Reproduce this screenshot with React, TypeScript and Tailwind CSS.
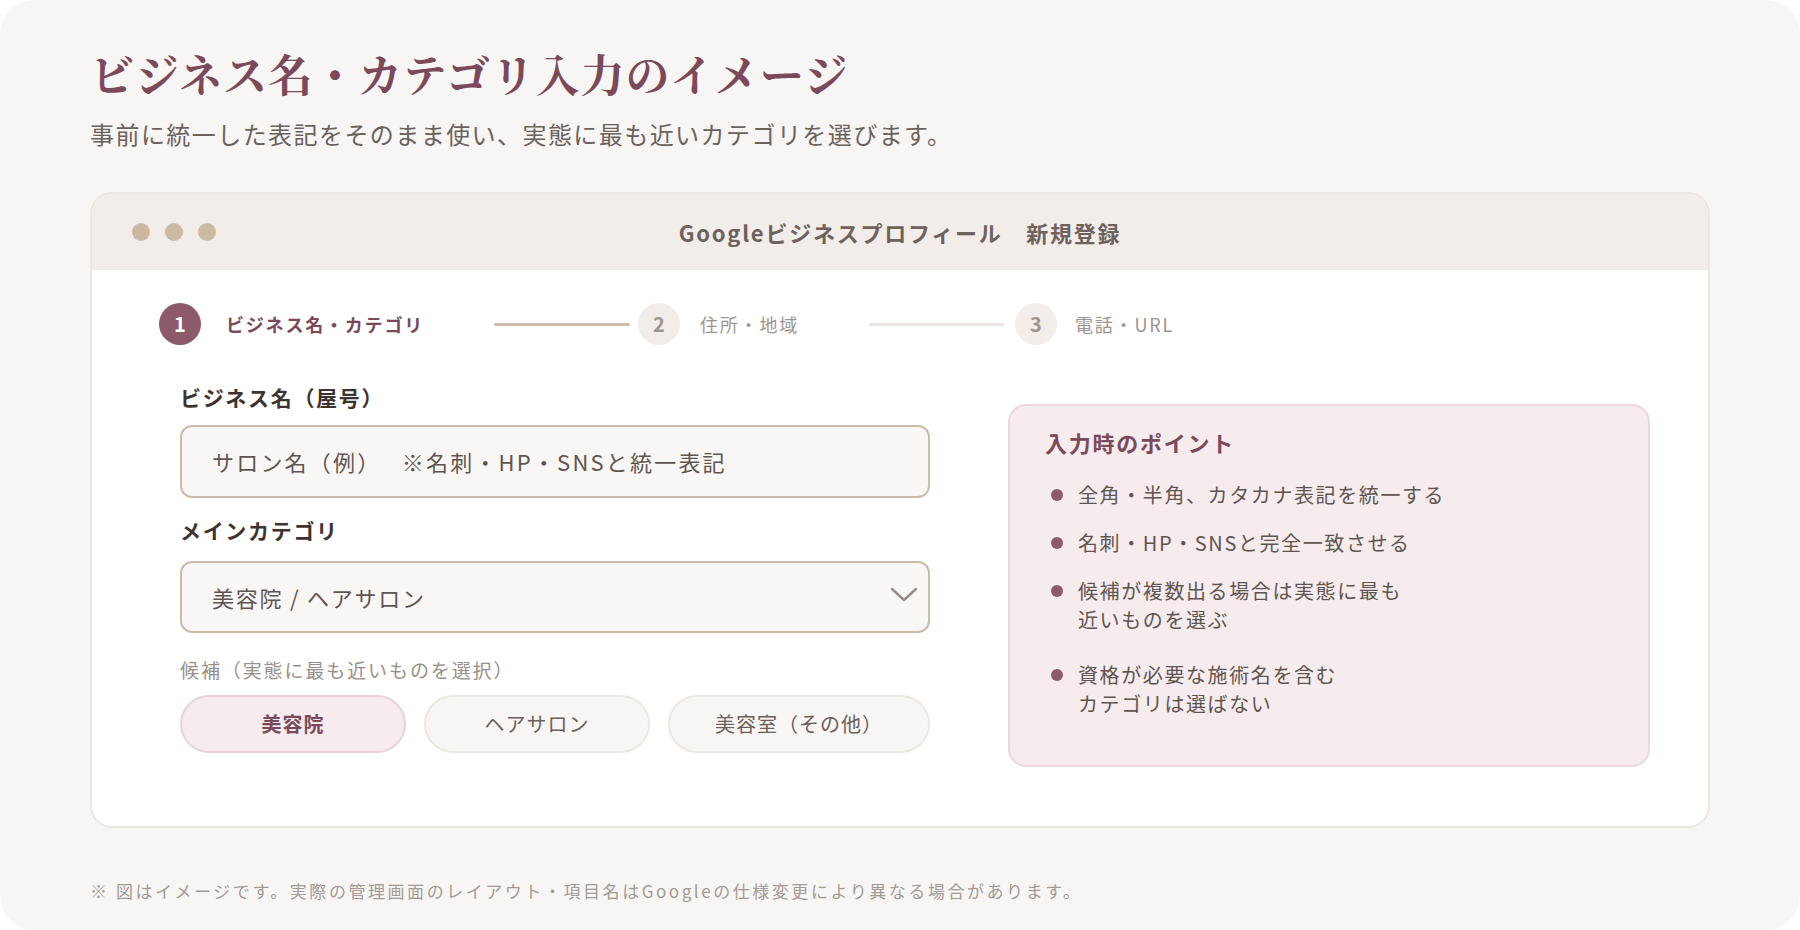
const points = [
  { lines: ['全角・半角、カタカナ表記を統一する'], mt: 'mt-[23px]' },
  { lines: ['名刺・HP・SNSと完全一致させる'], mt: 'mt-[19px]' },
  { lines: ['候補が複数出る場合は実態に最も', '近いものを選ぶ'], mt: 'mt-[19px]' },
  { lines: ['資格が必要な施術名を含む', 'カテゴリは選ばない'], mt: 'mt-[26px]' },
]

function App() {
  return (
    <div className="w-[1800px] h-[930px] bg-white font-['Noto_Sans_CJK_JP','Noto_Sans',sans-serif]">
      <div className="h-full rounded-[34px] bg-[#f8f6f4] px-[90px] pt-[45px]">
        {/* Heading */}
        <h1 className="text-[44px] leading-[56px] tracking-[0.02em] font-bold text-[#7b4a5a] font-['Noto_Serif_CJK_JP','Noto_Sans_CJK_JP',serif]">
          ビジネス名・カテゴリ入力のイメージ
        </h1>
        <p className="mt-[16px] text-[24px] leading-[34px] tracking-[0.06em] text-[#6b625d]">
          事前に統一した表記をそのまま使い、実態に最も近いカテゴリを選びます。
        </p>

        {/* Browser window */}
        <div className="mt-[41px] h-[636px] rounded-[22px] border-2 border-[#ece6e1] bg-white overflow-hidden">
          <div className="h-[76px] bg-[#f2ede9] grid grid-cols-[1fr_auto_1fr] items-center px-[40px]">
            <div className="flex gap-[15px]">
              <span className="w-[18px] h-[18px] rounded-full bg-[#cdb8a3]" />
              <span className="w-[18px] h-[18px] rounded-full bg-[#cdb8a3]" />
              <span className="w-[18px] h-[18px] rounded-full bg-[#cdb8a3]" />
            </div>
            <div className="text-[22px] font-semibold tracking-[0.08em] text-[#6e625c]">
              Googleビジネスプロフィール　新規登録
            </div>
            <div />
          </div>

          {/* Steps */}
          <div className="pt-[33px] pl-[67px] flex items-center">
            <div className="w-[42px] h-[42px] rounded-full bg-[#8c5a68] flex items-center justify-center text-white text-[20px] font-bold">
              1
            </div>
            <div className="ml-[25px] w-[268px] text-[18px] font-bold tracking-[0.1em] text-[#7a4a5a]">
              ビジネス名・カテゴリ
            </div>
            <div className="w-[136px] h-[3px] rounded-full bg-[#cfbba8]" />
            <div className="ml-[8px] w-[42px] h-[42px] rounded-full bg-[#f2ede9] flex items-center justify-center text-[#a0948c] text-[20px] font-semibold">
              2
            </div>
            <div className="ml-[20px] w-[169px] text-[18px] tracking-[0.1em] text-[#9e948d]">
              住所・地域
            </div>
            <div className="w-[135px] h-[3px] rounded-full bg-[#ebe5e1]" />
            <div className="ml-[11px] w-[42px] h-[42px] rounded-full bg-[#f2ede9] flex items-center justify-center text-[#a0948c] text-[20px] font-semibold">
              3
            </div>
            <div className="ml-[18px] text-[18px] tracking-[0.1em] text-[#9e948d]">
              電話・URL
            </div>
          </div>

          {/* Form + tips */}
          <div className="mt-[38px] pl-[88px] flex gap-[78px]">
            <div className="w-[750px]">
              <div className="text-[21px] leading-[28px] font-bold tracking-[0.08em] text-[#3d3431]">
                ビジネス名（屋号）
              </div>
              <div className="mt-[14px] h-[73px] rounded-[12px] border-2 border-[#cdbba9] bg-[#f9f7f5] flex items-center pl-[30px] text-[22px] tracking-[0.1em] text-[#5f5550] whitespace-pre">
                サロン名（例）　 ※名刺・HP・SNSと統一表記
              </div>

              <div className="mt-[18px] text-[21px] leading-[28px] font-bold tracking-[0.08em] text-[#3d3431]">
                メインカテゴリ
              </div>
              <div className="mt-[17px] h-[72px] rounded-[12px] border-2 border-[#cdbba9] bg-[#f9f7f5] flex items-center justify-between pl-[30px] pr-[10px] text-[22px] tracking-[0.08em] text-[#5f5550]">
                <span>美容院 / ヘアサロン</span>
                <svg width="28" height="16" viewBox="0 0 28 16" fill="none" className="mb-[4px]">
                  <path d="M2 2 L14 13 L26 2" stroke="#9a8f88" strokeWidth="2.5" strokeLinecap="round" strokeLinejoin="round" />
                </svg>
              </div>

              <div className="mt-[24px] text-[19px] leading-[26px] tracking-[0.1em] text-[#9a8f88]">
                候補（実態に最も近いものを選択）
              </div>
              <div className="mt-[12px] flex gap-[18px]">
                <div className="w-[226px] h-[58px] rounded-full border-2 border-[#e8d3d9] bg-[#f6ecee] flex items-center justify-center text-[20px] font-bold tracking-[0.05em] text-[#7a4a5a]">
                  美容院
                </div>
                <div className="w-[226px] h-[58px] rounded-full border-2 border-[#ede7e2] bg-[#f8f6f4] flex items-center justify-center text-[20px] tracking-[0.05em] text-[#6b5f5a]">
                  ヘアサロン
                </div>
                <div className="flex-1 h-[58px] rounded-full border-2 border-[#ede7e2] bg-[#f8f6f4] flex items-center justify-center text-[20px] tracking-[0.05em] text-[#6b5f5a]">
                  美容室（その他）
                </div>
              </div>
            </div>

            <div className="mt-[21px] w-[642px] h-[363px] rounded-[18px] border-2 border-[#ecd9dd] bg-[#f6ecee] pl-[35px] pt-[21px]">
              <div className="text-[22px] leading-[30px] font-bold tracking-[0.08em] text-[#7a4a5a]">
                入力時のポイント
              </div>
              {points.map((p) => (
                <div key={p.lines[0]} className={`${p.mt} flex`}>
                  <div className="w-[33px] h-[29px] flex items-center pl-[6px]">
                    <span className="w-[12px] h-[12px] rounded-full bg-[#8c5a68]" />
                  </div>
                  <div className="text-[20px] leading-[29px] tracking-[0.08em] text-[#5f5550]">
                    {p.lines.map((l) => (
                      <div key={l}>{l}</div>
                    ))}
                  </div>
                </div>
              ))}
            </div>
          </div>
        </div>

        <p className="mt-[50px] text-[17px] leading-[26px] tracking-[0.15em] text-[#a39a94]">
          ※ 図はイメージです。実際の管理画面のレイアウト・項目名はGoogleの仕様変更により異なる場合があります。
        </p>
      </div>
    </div>
  )
}

export default App
